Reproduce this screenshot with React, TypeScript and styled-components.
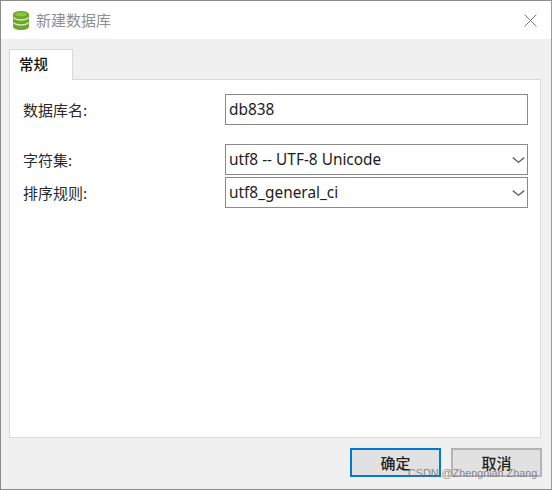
import React from "react";
import styled, { createGlobalStyle } from "styled-components";

const Global = createGlobalStyle`
  html, body { margin: 0; padding: 0; background: #fff; }
  #root { width: 552px; height: 490px; }
`;
const Win = styled.div`
  position: relative; box-sizing: border-box; width: 552px; height: 490px;
  display: flex; flex-direction: column; background: #f0f0f0;
  border: 1px solid #8c8c8c; border-right-color: #9a9a9a; border-bottom-color: #8c8c8c;
  font-family: "Noto Sans CJK SC", "Liberation Sans", sans-serif; color: #1a1a1a;
  overflow: hidden;
`;
const TitleBar = styled.div`
  height: 38px; flex: none; background: #fff; display: flex; align-items: center;
  padding-left: 12px; gap: 7px;
`;
const TitleText = styled.span`font-size: 15px; color: #8f8f8f; flex: 1; line-height: 20px;`;
const CloseIcon = styled.svg`width: 13px; height: 13px; margin-right: 14px; flex: none;`;
const Body = styled.div`flex: 1; display: flex; flex-direction: column; padding: 10px 9px 10px 8px; min-height: 0;`;
const TabRow = styled.div`display: flex; height: 30px; flex: none;`;
const Tab = styled.div`
  box-sizing: border-box; width: 64px; height: 31px; background: #fff;
  border: 1px solid #d9d9d9; border-bottom: none; font-size: 14.5px; font-weight: 500;
  padding: 4px 0 0 9px; line-height: 20px; position: relative; z-index: 1; color: #111;
`;
const Panel = styled.div`
  box-sizing: border-box; width: 532px; height: 359px; flex: none; background: #fff;
  border: 1px solid #d9d9d9; padding: 14px 12px 0 13px; display: flex; flex-direction: column;
`;
const Row = styled.div<{ $gap?: number }>`
  display: flex; align-items: center; height: 31px; flex: none; margin-bottom: ${p => p.$gap ?? 0}px;
`;
const Label = styled.label`width: 202px; flex: none; font-size: 15px; color: #2a2a2a; line-height: 20px;`;
const Field = styled.div`
  box-sizing: border-box; width: 303px; height: 31px; flex: none; border: 1px solid #8a8a8a; background: #fff;
  display: flex; align-items: center; justify-content: space-between; padding: 0 2px 0 3px;
  font-family: "Noto Sans", "Liberation Sans", sans-serif; font-size: 15.4px; color: #1c1c1c;
`;
const Chevron = styled.svg`width: 13px; height: 6px; flex: none;`;
const Footer = styled.div`display: flex; justify-content: flex-end; gap: 10px; margin-top: 10px;`;
const Button = styled.button<{ $primary?: boolean }>`
  box-sizing: border-box; width: 91px; height: 29px; padding: 0; background: #e1e1e1;
  border: ${p => (p.$primary ? "2px solid #0078d7" : "2px solid #b4b4b4")};
  font-family: "Noto Sans CJK SC", sans-serif; font-size: 15px; font-weight: 500; color: #222;
`;
const Watermark = styled.span`
  position: absolute; left: 407px; top: 466px; font-family: "Liberation Sans", sans-serif;
  font-size: 10.8px; color: rgba(110,110,110,0.8); white-space: nowrap;
`;

const Arrow = () => (
  <Chevron viewBox="0 0 13 6"><path d="M.8.6 6.500 5.200 12.200.6" fill="none" stroke="#666" strokeWidth="1.4" /></Chevron>
);

export default function App() {
  return (
    <>
      <Global />
      <Win>
        <TitleBar>
          <svg width="16" height="19" viewBox="0 0 16 19">
            <path d="M0 3.5C0 1.5 3.5 0 8 0s8 1.5 8 3.5V15.5C16 17.5 12.5 19 8 19s-8-1.5-8-3.5Z" fill="#6aa82a" />
            <path d="M0.5 6.5C2 8.3 5 9 8 9s6-.7 7.500-2.500M0.500 11.500C2 13.300 5 14 8 14s6-.7 7.500-2.500" fill="none" stroke="#d5e8bd" strokeWidth="1.300" />
            <ellipse cx="8" cy="3.300" rx="6" ry="2" fill="#8cc63f" />
          </svg>
          <TitleText>新建数据库</TitleText>
          <CloseIcon viewBox="0 0 13 13"><path d="M.5.5 12.500 12.500M12.500.5.500 12.500" stroke="#777" strokeWidth="1" fill="none" /></CloseIcon>
        </TitleBar>
        <Body>
          <TabRow><Tab>常规</Tab></TabRow>
          <Panel>
            <Row $gap={19}><Label>数据库名:</Label><Field>db838</Field></Row>
            <Row $gap={2}><Label>字符集:</Label><Field>utf8 -- UTF-8 Unicode<Arrow /></Field></Row>
            <Row><Label>排序规则:</Label><Field>utf8_general_ci<Arrow /></Field></Row>
          </Panel>
          <Footer>
            <Button $primary>确定</Button>
            <Button>取消</Button>
          </Footer>
        </Body>
        <Watermark>CSDN @Zhengnian Zhang</Watermark>
      </Win>
    </>
  );
}
